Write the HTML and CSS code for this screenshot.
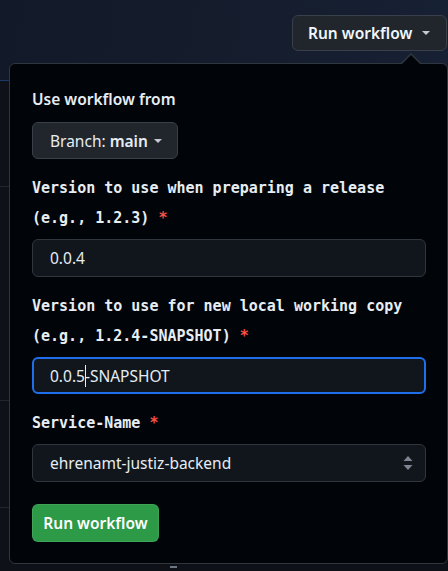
FILE: index.html
```html
<!DOCTYPE html>
<html lang="en">
<head>
<meta charset="utf-8">
<title>Run workflow</title>
<link rel="stylesheet" href="styles.css">
</head>
<body>
<div class="page">
  <header class="topbar">
    <button class="run-toggle" type="button">Run workflow <span class="caret"></span></button>
  </header>
  <div class="rows">
    <div class="row row-1"></div>
    <div class="row row-2"></div>
    <div class="row row-3"></div>
    <div class="row row-4"><span class="handle"></span></div>
  </div>

  <div class="popover">
    <div class="pop-body">
      <div class="title">Use workflow from</div>
      <button class="branch" type="button">Branch: <b>main</b> <span class="caret"></span></button>

      <div class="field-label">Version to use when preparing a release (e.g., 1.2.3) <span class="req">*</span></div>
      <div class="input">0.0.4</div>

      <div class="field-label">Version to use for new local working copy (e.g., 1.2.4-SNAPSHOT) <span class="req">*</span></div>
      <div class="input focused">0.0.5<span class="cursor"></span>-SNAPSHOT</div>

      <div class="field-label">Service-Name <span class="req">*</span></div>
      <div class="input select">ehrenamt-justiz-backend
        <svg class="updown" width="10" height="16" viewBox="0 0 10 16"><path d="M5 1 L9.5 6 H0.5 Z M5 15 L9.5 10 H0.5 Z" fill="#7d8590"/></svg>
      </div>

      <button class="submit" type="button">Run workflow</button>
    </div>
  </div>
</div>
</body>
</html>
```
FILE: styles.css
```css
html, body {
  margin: 0;
  padding: 0;
}
body {
  background: #0d1117;
  font-family: "Noto Sans", "Open Sans", sans-serif;
  color: #e6edf3;
  width: 448px;
  height: 571px;
  overflow: hidden;
}
.page {
  position: relative;
  width: 448px;
  height: 571px;
}
.topbar {
  height: 81px;
  box-sizing: border-box;
  border-bottom: 1px solid #1c3864;
  background: linear-gradient(100deg, #121928 0%, #151d2e 60%, #172134 100%);
  display: flex;
  justify-content: flex-end;
  align-items: flex-start;
  padding-top: 15px;
  padding-right: 1px;
}
.run-toggle {
  width: 155px;
  height: 36px;
  box-sizing: border-box;
  background: #21262d;
  border: 1px solid #3a4049;
  border-radius: 6px;
  color: #f0f6fc;
  font-family: inherit;
  font-weight: 600;
  font-size: 15.5px;
  display: flex;
  align-items: center;
  padding: 0 0 0 15px;
  gap: 10px;
  white-space: nowrap;
}
.caret {
  display: inline-block;
  width: 0;
  height: 0;
  border-left: 4.5px solid transparent;
  border-right: 4.5px solid transparent;
  border-top: 4.5px solid #c3cad2;
}
.rows {
  display: flex;
  flex-direction: column;
}
.row {
  border-bottom: 1px solid #21262d;
  background: #0e1218;
}
.row-1 { height: 105px; }
.row-2 { height: 213px; }
.row-3 { height: 106px; }
.row-4 { height: 64px; border-bottom: none; position: relative; }
.handle {
  position: absolute;
  left: 170px;
  top: 58px;
  width: 7px;
  height: 2px;
  background: #6e7681;
}

.popover {
  position: absolute;
  left: 9px;
  top: 63px;
  width: 439px;
  height: 501px;
  box-sizing: border-box;
  background: #010409;
  border: 1px solid #30363d;
  border-radius: 6px;
}
.popover::before,
.popover::after {
  content: "";
  position: absolute;
  width: 0;
  height: 0;
  border-left: 10px solid transparent;
  border-right: 10px solid transparent;
}
.popover::before {
  left: 391px;
  top: -11px;
  border-bottom: 10px solid #30363d;
}
.popover::after {
  left: 392px;
  top: -9px;
  border-left-width: 9px;
  border-right-width: 9px;
  border-bottom: 9px solid #010409;
}
.pop-body {
  display: flex;
  flex-direction: column;
  align-items: flex-start;
  padding: 23px 21px 0 22px;
}
.title {
  font-weight: 600;
  font-size: 15.5px;
  line-height: 24px;
}
.branch {
  margin-top: 11px;
  height: 37px;
  width: 146px;
  box-sizing: border-box;
  background: #21262d;
  border: 1px solid #3a4049;
  border-radius: 6px;
  color: #e6edf3;
  font-family: inherit;
  font-size: 15.5px;
  display: flex;
  align-items: center;
  gap: 6px;
  padding: 0 0 0 17px;
  white-space: nowrap;
}
.branch b {
  font-weight: 600;
  margin-left: -2px;
}
.field-label {
  margin-top: 14px;
  font-family: "DejaVu Sans Mono", "Liberation Mono", monospace;
  font-weight: 700;
  font-size: 15px;
  line-height: 30px;
  color: #e6edf3;
  width: 100%;
}
.req {
  color: #f85149;
}
.input {
  margin-top: 6px;
  width: 100%;
  height: 38px;
  box-sizing: border-box;
  background: #11161d;
  border: 1px solid #30363d;
  border-radius: 6px;
  display: flex;
  align-items: center;
  padding-left: 17px;
  font-size: 15.5px;
  color: #e6edf3;
  white-space: nowrap;
}
.input.focused {
  height: 37px;
  border: 2px solid #1f6feb;
  padding-left: 16px;
}
.cursor {
  display: inline-block;
  width: 1px;
  height: 22px;
  background: #e6edf3;
  margin-right: -1px;
}
.input.select {
  justify-content: space-between;
  padding-right: 12px;
}
.updown {
  display: block;
}
.submit {
  margin-top: 22px;
  width: 127px;
  height: 38px;
  box-sizing: border-box;
  background: #2c9a46;
  border: 1px solid rgba(240, 246, 252, 0.1);
  border-radius: 6px;
  color: #ffffff;
  font-family: inherit;
  font-weight: 600;
  font-size: 15.5px;
  padding: 0;
  white-space: nowrap;
}
```
